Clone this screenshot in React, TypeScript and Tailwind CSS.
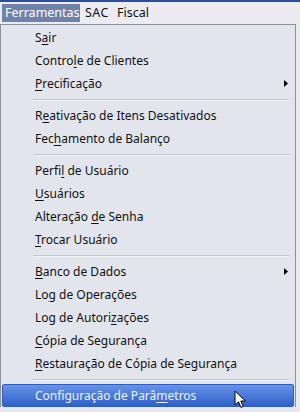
import React from "react"

type Item =
  | { kind: "item"; label: string; key: number; sub?: boolean; active?: boolean }
  | { kind: "sep" }

// índice da letra sublinhada (atalho) em cada rótulo
const items: Item[] = [
  { kind: "item", label: "Sair", key: 1 },
  { kind: "item", label: "Controle de Clientes", key: 6 },
  { kind: "item", label: "Precificação", key: 0, sub: true },
  { kind: "sep" },
  { kind: "item", label: "Reativação de Itens Desativados", key: 1 },
  { kind: "item", label: "Fechamento de Balanço", key: 3 },
  { kind: "sep" },
  { kind: "item", label: "Perfil de Usuário", key: 5 },
  { kind: "item", label: "Usuários", key: 0 },
  { kind: "item", label: "Alteração de Senha", key: 10 },
  { kind: "item", label: "Trocar Usuário", key: 0 },
  { kind: "sep" },
  { kind: "item", label: "Banco de Dados", key: 0, sub: true },
  { kind: "item", label: "Log de Operações", key: 2 },
  { kind: "item", label: "Log de Autorizações", key: 13 },
  { kind: "item", label: "Cópia de Segurança", key: 0 },
  { kind: "item", label: "Restauração de Cópia de Segurança", key: 0 },
  { kind: "sep" },
  { kind: "item", label: "Configuração de Parâmetros", key: 20, active: true },
]

function Label({ text, at }: { text: string; at: number }) {
  return (
    <span>
      {text.slice(0, at)}
      <span className="underline underline-offset-2">{text[at]}</span>
      {text.slice(at + 1)}
    </span>
  )
}

function Cursor() {
  return (
    <svg width="13" height="19" viewBox="0 0 13 19" className="absolute left-[231px] top-[5px]">
      <path d="M1 1 L1 15 L4.5 11.8 L7 17.5 L9.2 16.5 L6.8 11 L11.5 11 Z" fill="#fff" stroke="#000" strokeWidth="1" strokeLinejoin="round" />
    </svg>
  )
}

export default function App() {
  return (
    <div className="h-[412px] w-[300px] overflow-hidden bg-[#e7e8ee] text-[12px] text-[#111]" style={{ fontFamily: "'Noto Sans', 'Open Sans', sans-serif" }}>
      {/* barra de menus */}
      <div className="h-[2px] bg-[#2b4f9c]" />
      <div className="flex h-[22px] items-start bg-[#ecebf2] pt-[2px] text-[12.5px]">
        <div className="ml-[2px] flex h-[18px] w-[78px] items-center bg-[#6f82aa] pl-[3px] text-white">Ferramentas</div>
        <div className="ml-[5px] flex h-[18px] items-center tracking-[0.5px]">SAC</div>
        <div className="ml-[8px] flex h-[18px] items-center">Fiscal</div>
      </div>

      {/* menu suspenso */}
      <div className="flex">
        <div className="w-[296px] border-t border-r border-l border-[#8e9199] bg-[#e3e5ec] pt-[1px]">
          {items.map((it, i) =>
            it.kind === "sep" ? (
              <div key={i} className="flex h-[9px] flex-col justify-center pr-[6px] pl-[32px]">
                <div className="h-px bg-[#c3c6ce]" />
                <div className="h-px bg-[#f3f4f7]" />
              </div>
            ) : it.active ? (
              <div key={i} className="relative mx-[1px] flex h-[23px] items-center rounded-[2px] border border-[#2f5cbf] bg-gradient-to-b from-[#6793e8] to-[#2f60c9] pl-[32px] text-[#eef3ff]">
                <Label text={it.label} at={it.key} />
                <Cursor />
              </div>
            ) : (
              <div key={i} className="flex h-[23px] items-center justify-between pr-[7px] pl-[34px]">
                <Label text={it.label} at={it.key} />
                {it.sub && (
                  <svg width="4" height="7" viewBox="0 0 4 7">
                    <path d="M0 0 L4 3.5 L0 7 Z" fill="#000" />
                  </svg>
                )}
              </div>
            )
          )}
        </div>
        <div className="flex-1 bg-[#eaebef]" />
      </div>
    </div>
  )
}
